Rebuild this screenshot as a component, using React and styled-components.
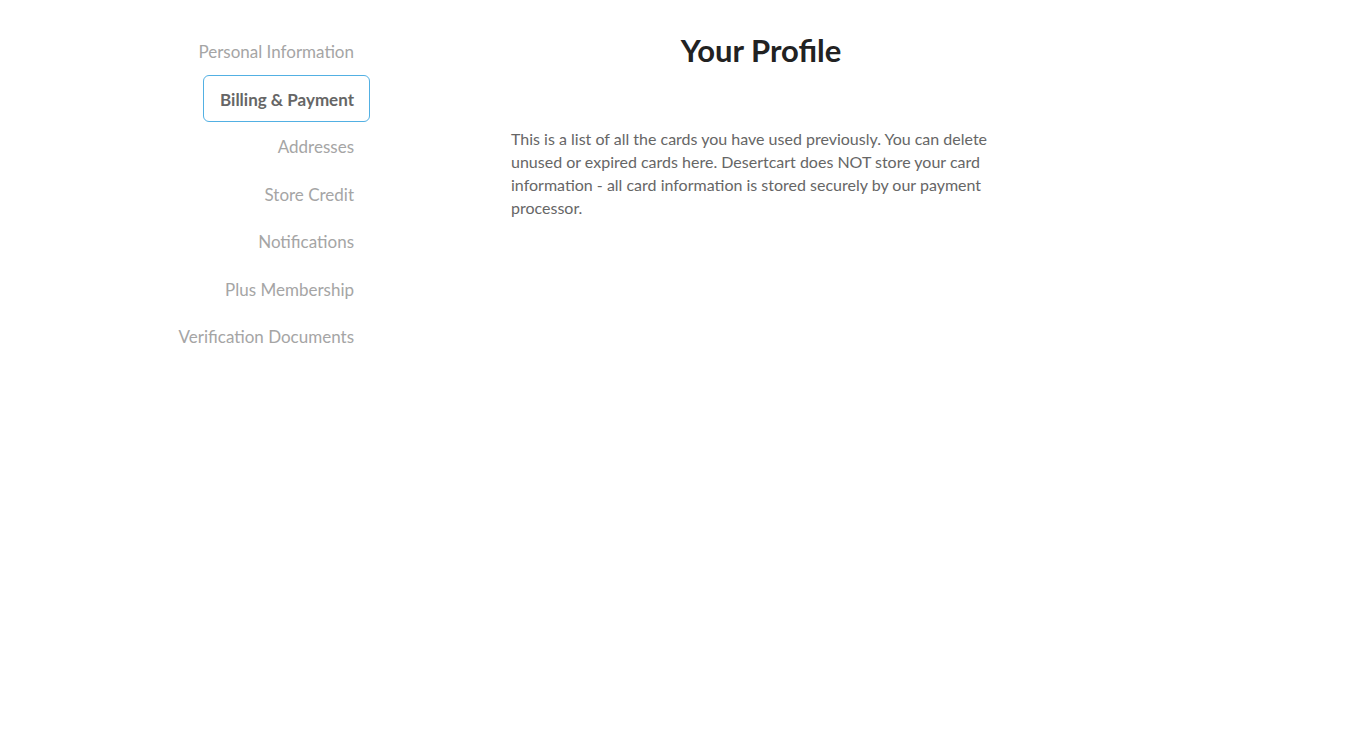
import React from "react";
import styled, { createGlobalStyle } from "styled-components";

const Global = createGlobalStyle`
  html, body { margin: 0; padding: 0; background: #fff; }
  body { font-family: Lato, "Open Sans", sans-serif; }
`;

const Page = styled.div`
  display: flex;
  align-items: flex-start;
  padding-left: 160px;
  padding-top: 27px;
`;

const Nav = styled.nav`
  display: flex;
  flex-direction: column;
  align-items: flex-end;
  width: 210px;
`;

const NavItem = styled.a`
  box-sizing: border-box;
  height: 47.5px;
  display: flex;
  align-items: center;
  padding: 2px 15px 0 16px;
  font-size: 17px;
  color: ${(p) => (p.$active ? "#666" : "#a5a5a5")};
  font-weight: ${(p) => (p.$active ? 700 : 400)};
  border: 1px solid ${(p) => (p.$active ? "#52b0e3" : "transparent")};
  border-radius: 6px;
  text-decoration: none;
  white-space: nowrap;
  cursor: pointer;
`;

const Main = styled.main`
  margin-left: 141px;
  width: 500px;
  display: flex;
  flex-direction: column;
`;

const Title = styled.h1`
  margin: 0;
  text-align: center;
  font-size: 31px;
  font-weight: 700;
  color: #222;
  line-height: 46px;
`;

const Text = styled.p`
  margin: 54px 0 0;
  font-size: 16px;
  line-height: 23px;
  color: #666;
  padding-right: 10px;
`;

const items = [
  "Personal Information",
  "Billing & Payment",
  "Addresses",
  "Store Credit",
  "Notifications",
  "Plus Membership",
  "Verification Documents",
];

export default function App() {
  return (
    <>
      <Global />
      <Page>
        <Nav>
          {items.map((it) => (
            <NavItem key={it} $active={it === "Billing & Payment"}>
              {it}
            </NavItem>
          ))}
        </Nav>
        <Main>
          <Title>Your Profile</Title>
          <Text>
            This is a list of all the cards you have used previously. You can delete
            unused or expired cards here. Desertcart does NOT store your card
            information - all card information is stored securely by our payment
            processor.
          </Text>
        </Main>
      </Page>
    </>
  );
}
